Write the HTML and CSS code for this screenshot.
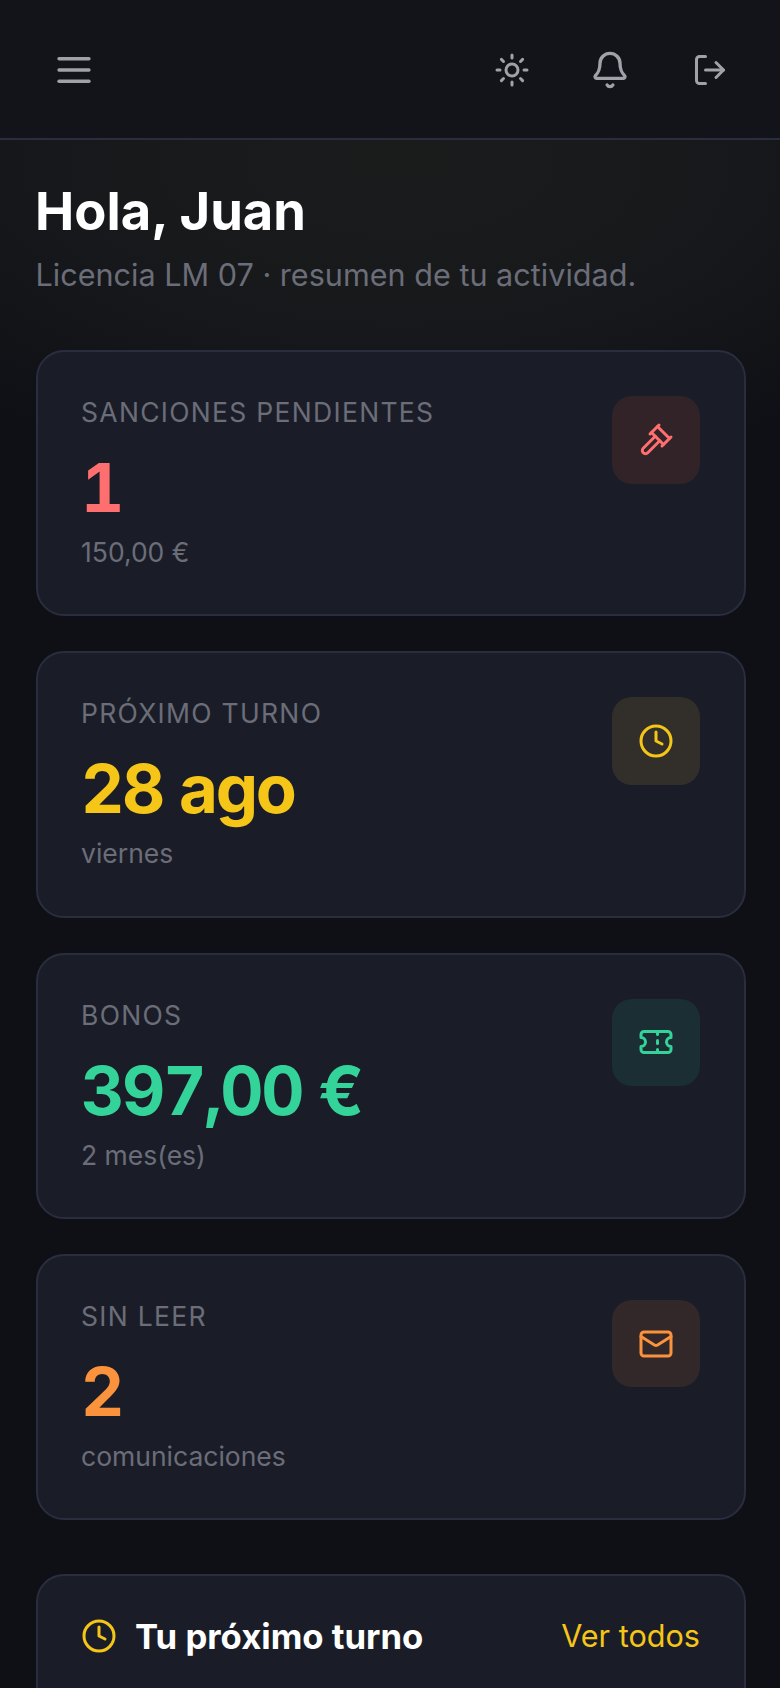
FILE: index.html
```html
<!DOCTYPE html>
<html lang="es">
<head>
    <meta charset="UTF-8">
    <meta name="viewport" content="width=device-width, initial-scale=1.0">
    <title>Resumen</title>
    <link rel="stylesheet" href="styles.css">
</head>
<body>

<header class="topbar">
    <button class="icon-btn">
        <svg class="icon icon-menu" viewBox="0 0 24 24"><path d="M2 4.5h20"/><path d="M2 12h20"/><path d="M2 19.5h20"/></svg>
    </button>
    <div class="topbar-actions">
        <button class="icon-btn">
            <svg class="icon" viewBox="0 0 24 24"><circle cx="12" cy="12" r="4"/><path d="M12 2v2"/><path d="M12 20v2"/><path d="m4.93 4.93 1.41 1.41"/><path d="m17.66 17.66 1.41 1.41"/><path d="M2 12h2"/><path d="M20 12h2"/><path d="m6.34 17.66-1.41 1.41"/><path d="m19.07 4.93-1.41 1.41"/></svg>
        </button>
        <button class="icon-btn">
            <svg class="icon icon-bell" viewBox="0 0 24 24"><path d="M10.268 21a2 2 0 0 0 3.464 0"/><path d="M3.262 15.326A1 1 0 0 0 4 17h16a1 1 0 0 0 .74-1.673C19.41 13.956 18 12.499 18 8A6 6 0 0 0 6 8c0 4.499-1.411 5.956-2.738 7.326"/></svg>
        </button>
        <button class="icon-btn">
            <svg class="icon" viewBox="0 0 24 24"><path d="M9 21H5a2 2 0 0 1-2-2V5a2 2 0 0 1 2-2h4"/><path d="m16 17 5-5-5-5"/><path d="M21 12H9"/></svg>
        </button>
    </div>
</header>

<main class="content">
    <h1 class="greeting">Hola, Juan</h1>
    <p class="subtitle">Licencia LM 07 · resumen de tu actividad.</p>

    <section class="stats">
        <article class="stat-card">
            <div class="stat-text">
                <div class="stat-label">SANCIONES PENDIENTES</div>
                <div class="stat-value red">1</div>
                <div class="stat-note">150,00 €</div>
            </div>
            <div class="stat-icon bg-red">
                <svg class="icon red" viewBox="0 0 24 24"><path d="m14.5 12.5-8 8a2.119 2.119 0 1 1-3-3l8-8"/><path d="m16 16 6-6"/><path d="m8 8 6-6"/><path d="m9 7 8 8"/><path d="m21 11-8-8"/></svg>
            </div>
        </article>

        <article class="stat-card">
            <div class="stat-text">
                <div class="stat-label">PRÓXIMO TURNO</div>
                <div class="stat-value yellow">28 ago</div>
                <div class="stat-note">viernes</div>
            </div>
            <div class="stat-icon bg-yellow">
                <svg class="icon yellow" viewBox="0 0 24 24"><circle cx="12" cy="12" r="10"/><path d="M12 6v6l4 2"/></svg>
            </div>
        </article>

        <article class="stat-card">
            <div class="stat-text">
                <div class="stat-label">BONOS</div>
                <div class="stat-value green">397,00 €</div>
                <div class="stat-note">2 mes(es)</div>
            </div>
            <div class="stat-icon bg-green">
                <svg class="icon green" viewBox="0 0 24 24"><path d="M2 9a3 3 0 0 1 0 6v2a2 2 0 0 0 2 2h16a2 2 0 0 0 2-2v-2a3 3 0 0 1 0-6V7a2 2 0 0 0-2-2H4a2 2 0 0 0-2 2Z"/><path d="M13 5v2"/><path d="M13 17v2"/><path d="M13 11v2"/></svg>
            </div>
        </article>

        <article class="stat-card">
            <div class="stat-text">
                <div class="stat-label">SIN LEER</div>
                <div class="stat-value orange">2</div>
                <div class="stat-note">comunicaciones</div>
            </div>
            <div class="stat-icon bg-orange">
                <svg class="icon orange" viewBox="0 0 24 24"><rect x="2" y="4" width="20" height="16" rx="2"/><path d="m22 7-8.97 5.7a1.94 1.94 0 0 1-2.06 0L2 7"/></svg>
            </div>
        </article>
    </section>

    <section class="panel">
        <div class="panel-head">
            <h2 class="panel-title">
                <svg class="icon yellow" viewBox="0 0 24 24"><circle cx="12" cy="12" r="10"/><path d="M12 6v6l4 2"/></svg>
                Tu próximo turno
            </h2>
            <a class="panel-link">Ver todos</a>
        </div>
    </section>
</main>

</body>
</html>
```

FILE: styles.css
```css
* {
    box-sizing: border-box;
}
html, body {
    margin: 0;
    height: 1688px;
    overflow: hidden;
}
body {
    font-family: Inter, "Liberation Sans", sans-serif;
    color: #fff;
    background: radial-gradient(ellipse 640px 320px at 400px 160px, #1a1c1c 0%, #16181b 55%, transparent 100%), #0e1015;
}

.icon {
    display: block;
    width: 36px;
    height: 36px;
    flex: none;
    fill: none;
    stroke: currentColor;
    stroke-width: 2;
    stroke-linecap: round;
    stroke-linejoin: round;
}
.icon-menu {
    stroke-width: 2.2;
}
.icon-bell {
    width: 40px;
    height: 40px;
}

/* top bar */
.topbar {
    display: flex;
    justify-content: space-between;
    align-items: center;
    height: 140px;
    padding: 2px 34px 0 38px;
    background: #12141a;
    border-bottom: 2px solid #2a2d3e;
}
.topbar-actions {
    display: flex;
    gap: 26px;
}
.icon-btn {
    display: flex;
    justify-content: center;
    align-items: center;
    width: 72px;
    height: 72px;
    padding: 0;
    border: 0;
    background: none;
    color: #a1a1aa;
}
.topbar-actions .icon-btn:last-child {
    margin-left: 2px;
}

/* greeting */
.content {
    padding: 39px 34px 0 36px;
}
.greeting {
    margin: 0 0 0 -1px;
    font-size: 52.5px;
    line-height: 64px;
    font-weight: 700;
}
.subtitle {
    margin: 10px 0 0 -0.5px;
    font-size: 30.6px;
    line-height: 44px;
    color: #6b6d78;
}

/* stat cards */
.stats {
    display: flex;
    flex-direction: column;
    gap: 35px;
    margin-top: 53px;
}
.stat-card {
    display: flex;
    justify-content: space-between;
    align-items: flex-start;
    padding: 44px 44px 42.3px 43px;
    background: #1a1d28;
    border: 2px solid #2a2d3e;
    border-radius: 28px;
}
.stat-label {
    margin-top: -2px;
    font-size: 26.5px;
    line-height: 36px;
    letter-spacing: 1.3px;
    color: #6b6d78;
}
.stat-value {
    margin-top: 18px;
    font-size: 67px;
    line-height: 80px;
    font-weight: 700;
    letter-spacing: -2.2px;
    font-variant-numeric: tabular-nums;
}
.stat-note {
    margin-top: 4px;
    font-size: 26.5px;
    line-height: 40px;
    color: #6b6d78;
}
.stat-icon {
    display: flex;
    justify-content: center;
    align-items: center;
    width: 88px;
    height: 87.6px;
    border-radius: 20px;
}

.red { color: #ff6f6f; }
.yellow { color: #f5c518; }
.green { color: #34d399; }
.orange { color: #fb923c; }
.bg-red { background: #322329; }
.bg-yellow { background: #322f2b; }
.bg-green { background: #1a2e33; }
.bg-orange { background: #322829; }

/* next turn panel */
.panel {
    margin-top: 53.5px;
    height: 260px;
    padding: 36px 44px 36px 43px;
    background: #1a1d28;
    border: 2px solid #2a2d3e;
    border-radius: 28px;
}
.panel-head {
    display: flex;
    justify-content: space-between;
    align-items: center;
}
.panel-title {
    display: flex;
    align-items: center;
    gap: 18px;
    margin: 0;
    font-size: 34.7px;
    line-height: 48px;
    font-weight: 700;
}
.panel-link {
    font-size: 30.6px;
    color: #f5c518;
}
```
